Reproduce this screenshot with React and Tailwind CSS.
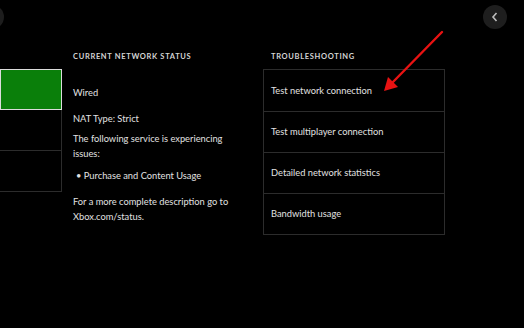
import React from 'react'

const font = { fontFamily: '"Lato", "Liberation Sans", sans-serif' }

const troubleshooting = [
  'Test network connection',
  'Test multiplayer connection',
  'Detailed network statistics',
  'Bandwidth usage',
]

export default function App() {
  return (
    <div style={font} className="relative w-[524px] h-[328px] overflow-hidden bg-black text-[#e2e2e2]">
      {/* cut off button on the left edge */}
      <div className="absolute -left-[20px] top-[5px] w-[24px] h-[24px] rounded-full bg-[#1d1d1d]" />

      <div className="flex">
        {/* left column */}
        <div className="w-[62px] pt-[69px] flex flex-col">
          <div className="h-[41px] bg-[#0a7f0a] border border-[#dcdcdc]" />
          <div className="h-[41px] border-r border-b border-[#2c2c2c]" />
          <div className="h-[41px] border-r border-b border-[#2c2c2c]" />
        </div>

        {/* current network status */}
        <div className="ml-[11px] w-[190px] pt-[52px]">
          <div className="text-[7.5px] font-bold tracking-[0.09em] text-[#d4d4d4] leading-[10px]">CURRENT NETWORK STATUS</div>
          <div className="mt-[23px] text-[9.3px] leading-[15px] flex flex-col gap-[11px]">
            <p>Wired</p>
            <p>NAT Type: Strict</p>
            <p className="-mt-[6px]">The following service is experiencing<br />issues:</p>
            <p className="pl-[3px] -mt-[4px]">• Purchase and Content Usage</p>
            <p>For a more complete description go to<br />Xbox.com/status.</p>
          </div>
        </div>

        {/* troubleshooting */}
        <div className="w-[182px] pt-[52px]">
          <div className="pl-[8px] text-[7.5px] font-bold tracking-[0.09em] text-[#d4d4d4] leading-[10px]">TROUBLESHOOTING</div>
          <div className="mt-[7px] border border-[#2c2c2c]">
            {troubleshooting.map((item, key) => (
              <div key={'ts' + key} className={'h-[41px] flex items-center pl-[7px] text-[9.3px] ' + (key > 0 ? 'border-t border-[#2c2c2c]' : '')}>
                {item}
              </div>
            ))}
          </div>
        </div>

        {/* back button */}
        <div className="flex-1 pt-[5px] pl-[38px]">
          <div className="w-[24px] h-[24px] rounded-full bg-[#1e1e1e] flex items-center justify-center">
            <svg width="10" height="12" viewBox="0 0 10 12" fill="none" stroke="#bdbdbd" strokeWidth="1.6">
              <path d="M6.5 2 L3 6 L6.5 10" />
            </svg>
          </div>
        </div>
      </div>

      {/* red annotation arrow */}
      <svg className="absolute left-0 top-0" width="524" height="328" viewBox="0 0 524 328">
        <line x1="442" y1="32" x2="392" y2="83" stroke="#e81212" strokeWidth="2.4" strokeLinecap="round" />
        <polygon points="384,91 388,77 398,87" fill="#e81212" />
      </svg>
    </div>
  )
}
